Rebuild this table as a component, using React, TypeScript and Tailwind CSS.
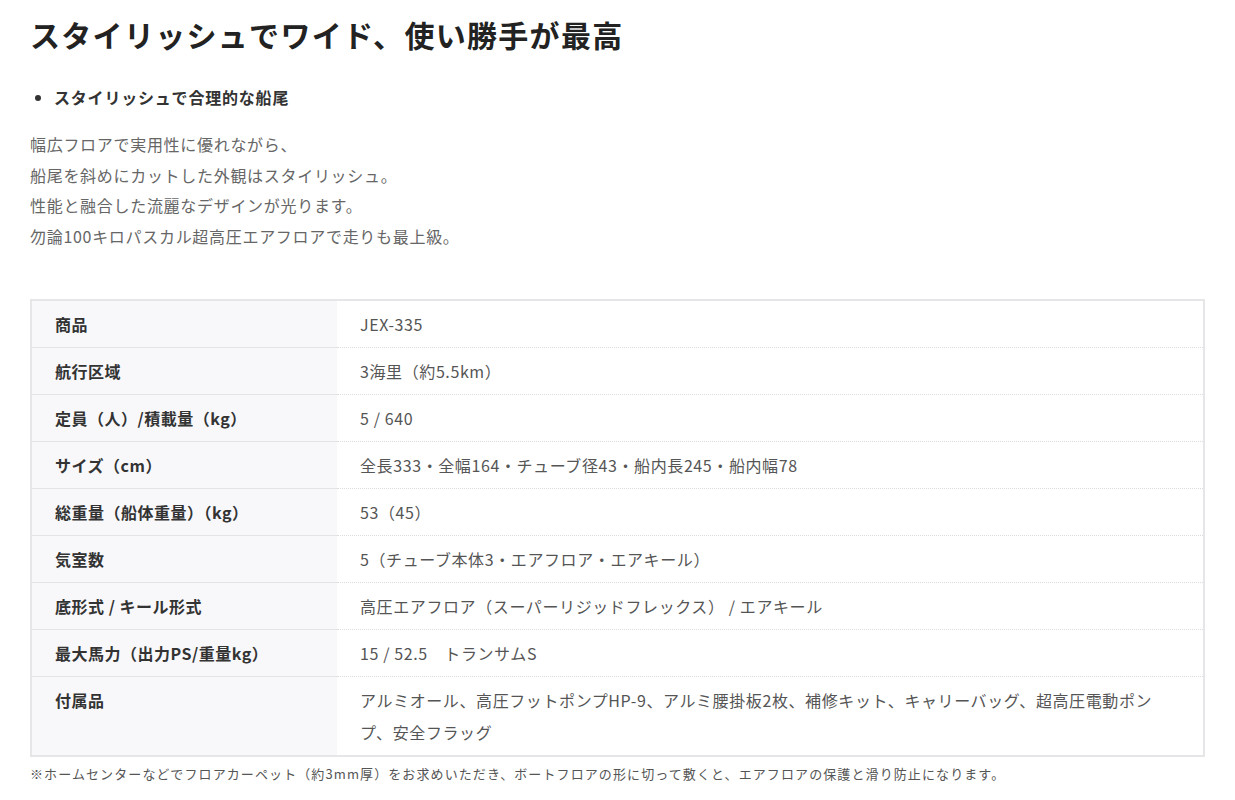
const SPECS = [
  { label: "商品", value: "JEX-335" },
  { label: "航行区域", value: "3海里（約5.5km）" },
  { label: "定員（人）/積載量（kg）", value: "5 / 640" },
  { label: "サイズ（cm）", value: "全長333・全幅164・チューブ径43・船内長245・船内幅78" },
  { label: "総重量（船体重量）（kg）", value: "53（45）" },
  { label: "気室数", value: "5（チューブ本体3・エアフロア・エアキール）" },
  { label: "底形式 / キール形式", value: "高圧エアフロア（スーパーリジッドフレックス） / エアキール" },
  { label: "最大馬力（出力PS/重量kg）", value: "15 / 52.5　トランサムS" },
  {
    label: "付属品",
    value: "アルミオール、高圧フットポンプHP-9、アルミ腰掛板2枚、補修キット、キャリーバッグ、超高圧電動ポンプ、安全フラッグ",
  },
];

export default function App() {
  return (
    <div
      className="min-h-screen bg-white px-[30px] pt-[14px] text-[#333]"
      style={{ fontFamily: '"Noto Sans CJK JP", "Noto Sans", sans-serif' }}
    >
      {/* Heading */}
      <h2 className="text-[30px] font-bold leading-[40px] tracking-[1.3px] text-[#222]">
        スタイリッシュでワイド、使い勝手が最高
      </h2>

      {/* Bullet */}
      <ul className="mt-[30px] list-disc pl-[24px]">
        <li className="text-[16px] font-bold leading-[26px] tracking-[0.8px] text-[#333]">
          スタイリッシュで合理的な船尾
        </li>
      </ul>

      {/* Paragraph */}
      <p className="mt-[19px] text-[16px] leading-[30.5px] tracking-[0.7px] text-[#666]">
        幅広フロアで実用性に優れながら、
        <br />
        船尾を斜めにカットした外観はスタイリッシュ。
        <br />
        性能と融合した流麗なデザインが光ります。
        <br />
        勿論100キロパスカル超高圧エアフロアで走りも最上級。
      </p>

      {/* Spec table */}
      <div className="mt-[48px] w-[1175px] border-2 border-[#e6e6e8]">
        {SPECS.map((s, i) => (
          <div key={s.label} className="flex">
            <div
              className={`w-[305px] shrink-0 bg-[#f8f8fb] px-[23px] py-[10px] text-[16px] font-bold leading-[26px] tracking-[0.5px] text-[#333] ${
                i > 0 ? "border-t border-[#e4e4e8]" : ""
              }`}
            >
              {s.label}
            </div>
            <div
              className={`flex-1 pl-[23px] pr-[25px] py-[7px] text-[16px] leading-[32px] tracking-[0.6px] text-[#555] ${
                i > 0 ? "border-t border-dotted border-[#dcdcdc]" : ""
              }`}
            >
              {s.value}
            </div>
          </div>
        ))}
      </div>

      {/* Footnote */}
      <p className="mt-[7px] text-[13px] leading-[20px] tracking-[1.1px] text-[#555]">
        ※ホームセンターなどでフロアカーペット（約3mm厚）をお求めいただき、ボートフロアの形に切って敷くと、エアフロアの保護と滑り防止になります。
      </p>
    </div>
  );
}
